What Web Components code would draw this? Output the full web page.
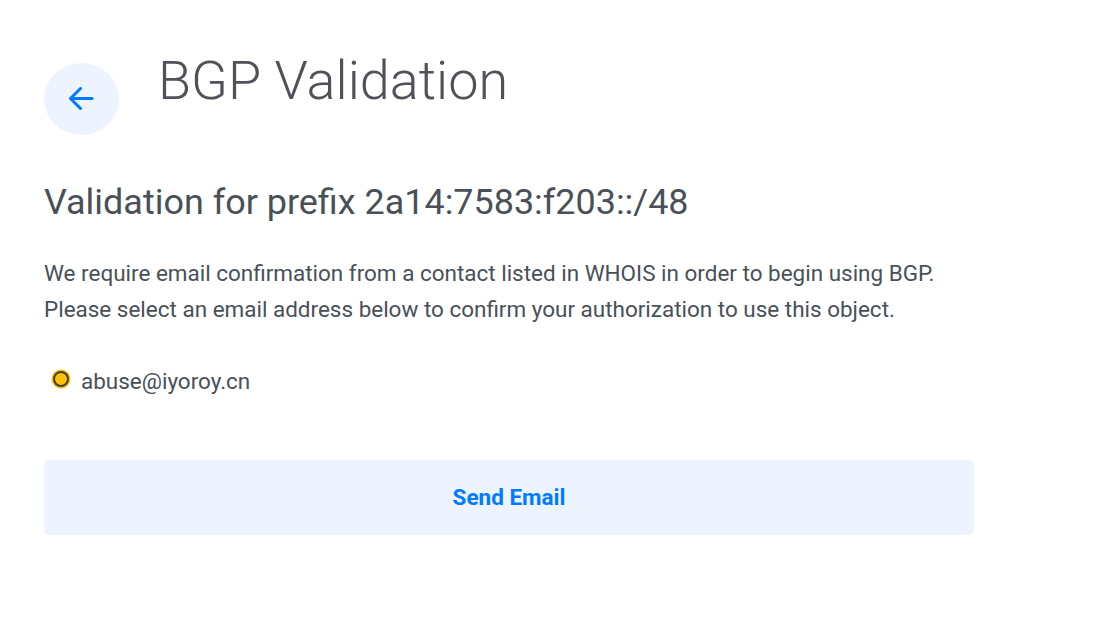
<!DOCTYPE html>
<html>
<head>
<meta charset="utf-8">
<style>
html, body { margin: 0; background: #fff; }
body { font-family: Roboto, sans-serif; color: #495057; }
</style>
</head>
<body>
<bgp-page></bgp-page>
<script>
const pageTemplate = document.createElement('template');
pageTemplate.innerHTML = `
<style>
  :host { display: block; padding: 47px 0 0 44px; }
  header { display: flex; align-items: flex-start; }
  h1 { margin: 0 0 0 39px; font-size: 54px; line-height: 67px; font-weight: 300; color: #4f5259; }
  h2 { margin: 44px 0 0; font-size: 35.95px; line-height: 46px; font-weight: 400; color: #495057; }
  p { margin: 30px 0 0; font-size: 22.48px; line-height: 36px; color: #495057; }
  .list { margin-top: 36px; }
  .action { margin-top: 61px; width: 930px; }
</style>
<header>
  <back-button></back-button>
  <h1>BGP Validation</h1>
</header>
<h2>Validation for prefix 2a14:7583:f203::/48</h2>
<p>We require email confirmation from a contact listed in WHOIS in order to begin using BGP.<br>Please select an email address below to confirm your authorization to use this object.</p>
<div class="list"><email-radio checked>abuse@iyoroy.cn</email-radio></div>
<div class="action"><action-button>Send Email</action-button></div>
`;

const backTemplate = document.createElement('template');
backTemplate.innerHTML = `
<style>
  :host { display: flex; align-items: center; justify-content: center; width: 75px; height: 72px; margin-top: 16px; border-radius: 50%; background: #edf3ff; flex: none; }
  svg { display: block; }
</style>
<svg width="26" height="24" viewBox="0 0 26 24" fill="none" stroke="#007bff" stroke-width="3" stroke-linecap="round" stroke-linejoin="round">
  <path d="M23 11.5H1.5M11.5 1.5L1.5 11.5l10 10"/>
</svg>
`;

const radioTemplate = document.createElement('template');
radioTemplate.innerHTML = `
<style>
  :host { display: flex; align-items: center; font-size: 22.48px; line-height: 36px; color: #495057; }
  .dot { box-sizing: border-box; width: 16px; height: 16px; margin: 0 12px 4px 9px; border-radius: 50%; background: #ffc107; border: 2.5px solid #3f3f3f; box-shadow: 0 0 0 1.5px #ffc107; flex: none; }
</style>
<span class="dot"></span><slot></slot>
`;

const buttonTemplate = document.createElement('template');
buttonTemplate.innerHTML = `
<style>
  :host { display: block; }
  .btn { height: 75px; padding-bottom: 1px; box-sizing: border-box; display: flex; align-items: center; justify-content: center; border-radius: 5px; background: #edf3ff; color: #007bff; font-size: 22.48px; font-weight: 700; }
</style>
<div class="btn"><slot></slot></div>
`;

class BgpPage extends HTMLElement {
  connectedCallback() {
    this.attachShadow({ mode: 'open' }).appendChild(pageTemplate.content.cloneNode(true));
  }
}
class BackButton extends HTMLElement {
  connectedCallback() {
    this.attachShadow({ mode: 'open' }).appendChild(backTemplate.content.cloneNode(true));
  }
}
class EmailRadio extends HTMLElement {
  connectedCallback() {
    this.attachShadow({ mode: 'open' }).appendChild(radioTemplate.content.cloneNode(true));
  }
}
class ActionButton extends HTMLElement {
  connectedCallback() {
    this.attachShadow({ mode: 'open' }).appendChild(buttonTemplate.content.cloneNode(true));
  }
}
customElements.define('back-button', BackButton);
customElements.define('email-radio', EmailRadio);
customElements.define('action-button', ActionButton);
customElements.define('bgp-page', BgpPage);
</script>
</body>
</html>
